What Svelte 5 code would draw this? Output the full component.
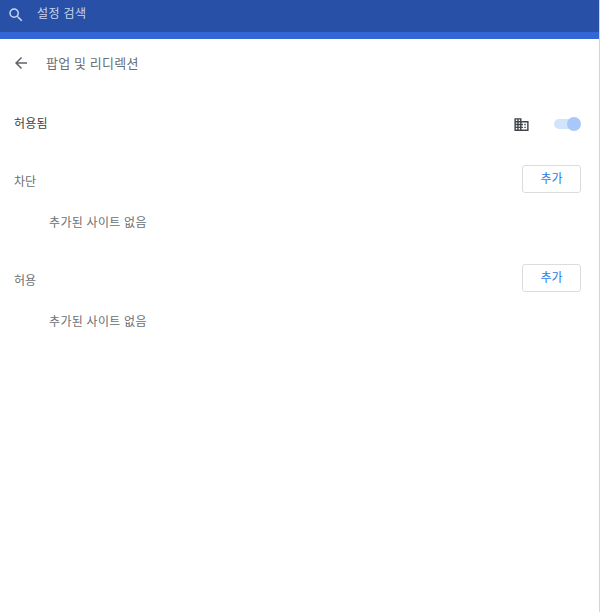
<script>
  const sections = [
    { title: '차단', empty: '추가된 사이트 없음' },
    { title: '허용', empty: '추가된 사이트 없음' }
  ];
</script>

<div class="page">
  <header class="top">
    <div class="searchbar">
      <svg class="search" viewBox="0 0 24 24" width="18" height="18" aria-hidden="true">
        <path fill="#c6d4ee" d="M15.5 14h-.79l-.28-.27A6.47 6.47 0 0 0 16 9.5 6.5 6.5 0 1 0 9.5 16c1.61 0 3.09-.59 4.23-1.57l.27.28v.79l5 4.99L20.49 19l-4.99-5zm-6 0C7.01 14 5 11.99 5 9.5S7.01 5 9.5 5 14 7.01 14 9.5 11.99 14 9.5 14z"/>
      </svg>
      <span class="placeholder">설정 검색</span>
    </div>
    <div class="strip"></div>
  </header>

  <main class="content">
    <div class="subpage">
      <svg class="back" viewBox="0 0 24 24" width="18" height="18" aria-hidden="true">
        <path fill="#5f6368" d="M20 11H7.83l5.59-5.59L12 4l-8 8 8 8 1.41-1.41L7.83 13H20v-2z"/>
      </svg>
      <h1>팝업 및 리디렉션</h1>
    </div>

    <div class="master">
      <span class="master-label">허용됨</span>
      <svg class="building" viewBox="0 0 24 24" width="17" height="17" aria-hidden="true">
        <path fill="#414549" d="M12 7V3H2v18h20V7H12zM6 19H4v-2h2v2zm0-4H4v-2h2v2zm0-4H4V9h2v2zm0-4H4V5h2v2zm4 12H8v-2h2v2zm0-4H8v-2h2v2zm0-4H8V9h2v2zm0-4H8V5h2v2zm10 12h-8v-2h2v-2h-2v-2h2v-2h-2V9h8v10zm-2-8h-2v2h2v-2zm0 4h-2v2h2v-2z"/>
      </svg>
      <span class="toggle"><span class="knob"></span></span>
    </div>

    {#each sections as s}
      <section class="section">
        <div class="section-head">
          <span class="section-title">{s.title}</span>
          <button class="add">추가</button>
        </div>
        <div class="empty">{s.empty}</div>
      </section>
    {/each}
  </main>
</div>

<style>
  :global(body) {
    margin: 0;
    background: #fff;
  }
  .page {
    height: 612px;
    overflow: hidden;
    display: flex;
    flex-direction: column;
    font-family: Roboto, "Noto Sans CJK KR", sans-serif;
    font-size: 12px;
    color: #6b6f73;
    box-sizing: border-box;
    border-right: 1px solid #d4d4d4;
  }
  .top {
    flex: none;
    background: #3367d6;
    margin-right: -1px;
  }
  .searchbar {
    height: 32px;
    background: #2850a7;
    margin-right: 1px;
    display: flex;
    align-items: center;
    padding: 0 0 4px 7px;
    box-sizing: border-box;
  }
  .search {
    margin-top: 1px;
  }
  .placeholder {
    margin-left: 12px;
    margin-top: -3px;
    color: #c6d4ee;
    font-size: 12px;
    letter-spacing: 0.45px;
  }
  .strip {
    height: 7px;
  }
  .content {
    flex: 1;
    display: flex;
    flex-direction: column;
  }
  .subpage {
    display: flex;
    align-items: center;
    height: 47px;
    padding: 0 0 1px 12px;
    box-sizing: border-box;
  }
  .back {
    margin-top: 1px;
  }
  h1 {
    margin: 0 0 0 16px;
    font-size: 13px;
    font-weight: 400;
    color: #6b6f73;
    letter-spacing: 0.3px;
  }
  .master {
    display: flex;
    align-items: center;
    height: 24px;
    margin-top: 25px;
    padding: 0 18px 0 14px;
  }
  .master-label {
    flex: 1;
    color: #3c4043;
    margin-top: -1px;
    letter-spacing: 0.2px;
  }
  .building {
    margin-right: 24.5px;
    margin-top: 3px;
  }
  .toggle {
    position: relative;
    display: block;
    width: 26px;
    height: 10px;
    border-radius: 5px;
    background: #d2e3fc;
    margin-right: 1px;
    margin-top: 1px;
  }
  .knob {
    position: absolute;
    right: -1px;
    top: -2px;
    width: 14px;
    height: 14px;
    border-radius: 50%;
    background: #a8c7fa;
  }
  .section {
    padding: 0 18px 0 14px;
    height: 99px;
  }
  .section:first-of-type {
    margin-top: 30px;
  }
  .section-head {
    display: flex;
    align-items: center;
    justify-content: space-between;
    height: 28px;
  }
  .section-title {
    margin-top: 2px;
  }
  .add {
    width: 59px;
    height: 28px;
    box-sizing: border-box;
    background: #fff;
    border: 1px solid #dadce0;
    border-radius: 3px;
    color: #2a7ae8;
    font: inherit;
    padding: 0 0 3px;
  }
  .empty {
    margin-top: 22px;
    padding-left: 35px;
    line-height: 16px;
    letter-spacing: 0.35px;
  }
</style>
